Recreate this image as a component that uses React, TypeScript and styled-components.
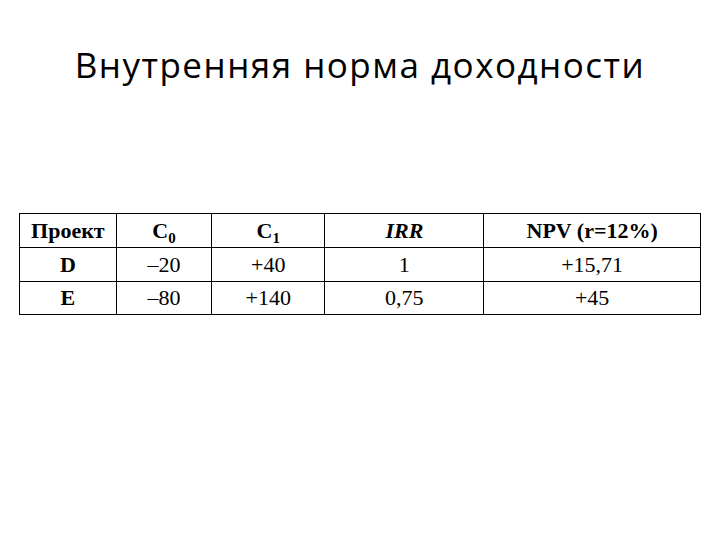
import React from "react";
import styled, { createGlobalStyle } from "styled-components";

const GlobalStyle = createGlobalStyle`
  html, body {
    margin: 0;
    padding: 0;
    background: #fff;
  }
`;

const Slide = styled.div`
  width: 720px;
  height: 540px;
  box-sizing: border-box;
  padding: 41px 19px 0 19px;
  display: flex;
  flex-direction: column;
  align-items: flex-start;
`;

const Title = styled.h1`
  align-self: stretch;
  margin: 0;
  text-align: center;
  font-family: "Open Sans", "Noto Sans", sans-serif;
  font-weight: 400;
  font-size: 35px;
  letter-spacing: 1.5px;
  line-height: 48px;
  color: #000;
`;

const Table = styled.table`
  margin-top: 124px;
  border-collapse: collapse;
  table-layout: fixed;
`;

const Row = styled.tr<{ $h: number }>`
  height: ${(p) => p.$h}px;
`;

const Cell = styled.td<{ $w?: number; $bold?: boolean; $italic?: boolean }>`
  width: ${(p) => (p.$w ? `${p.$w}px` : "auto")};
  border: 1px solid #000;
  padding: 0;
  text-align: center;
  vertical-align: middle;
  font-family: "Liberation Serif", "Times New Roman", serif;
  font-size: 22px;
  color: #000;
  line-height: 1;
  font-weight: ${(p) => (p.$bold ? 700 : 400)};
  font-style: ${(p) => (p.$italic ? "italic" : "normal")};
`;

const Sub = styled.sub`
  font-size: 15px;
  vertical-align: -5px;
  line-height: 0;
`;

const widths = [96, 95, 113, 159, 217];

const rows = [
  ["D", "–20", "+40", "1", "+15,71"],
  ["E", "–80", "+140", "0,75", "+45"],
];

export default function App() {
  return (
    <>
      <GlobalStyle />
      <Slide>
        <Title>Внутренняя норма доходности</Title>
        <Table>
          <tbody>
            <Row $h={34}>
              <Cell $w={widths[0]} $bold>Проект</Cell>
              <Cell $w={widths[1]} $bold>
                C<Sub>0</Sub>
              </Cell>
              <Cell $w={widths[2]} $bold>
                C<Sub>1</Sub>
              </Cell>
              <Cell $w={widths[3]} $bold $italic>IRR</Cell>
              <Cell $w={widths[4]} $bold>NPV (r=12%)</Cell>
            </Row>
            {rows.map((r, i) => (
              <Row key={i} $h={i === 0 ? 34 : 33}>
                {r.map((v, j) => (
                  <Cell key={j} $bold={j === 0}>
                    {v}
                  </Cell>
                ))}
              </Row>
            ))}
          </tbody>
        </Table>
      </Slide>
    </>
  );
}
